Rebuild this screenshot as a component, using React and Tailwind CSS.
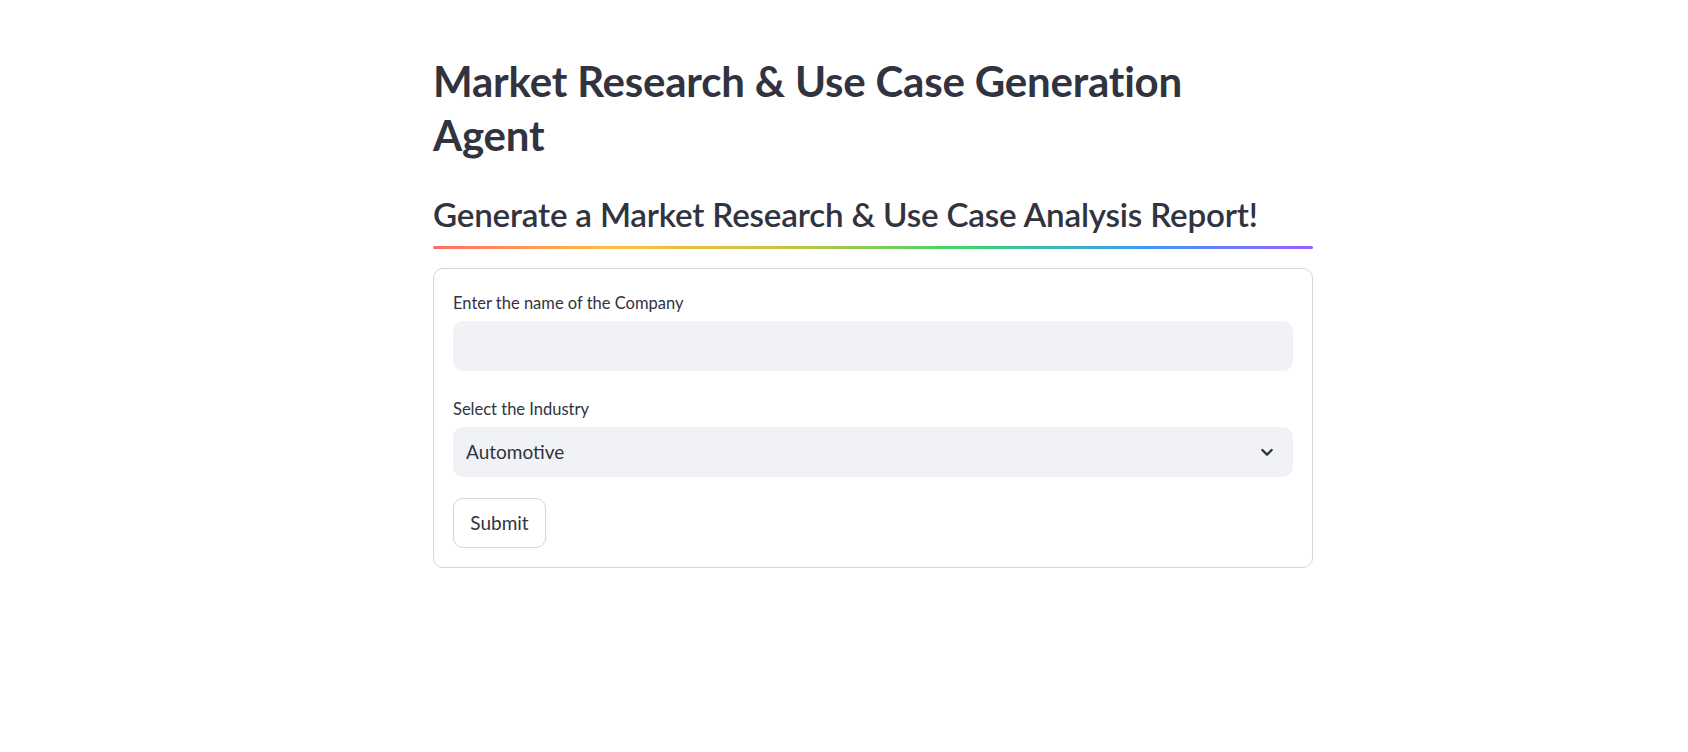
import React, { useState } from "react";

const industries = ["Automotive", "Healthcare", "Finance", "Retail", "Manufacturing", "Technology"];

function ChevronDown() {
  return (
    <svg width="16" height="16" viewBox="0 0 24 24" fill="none" stroke="currentColor" strokeWidth="3.5" strokeLinecap="round" strokeLinejoin="round">
      <path d="M5 9l7 7 7-7" />
    </svg>
  );
}

export default function App() {
  const [company, setCompany] = useState("");
  const [industry, setIndustry] = useState(industries[0]);

  return (
    <div className="min-h-screen w-full bg-white text-[#31333f] font-['Lato','Liberation_Sans',sans-serif]">
      <div className="ml-[433px] w-[880px] pt-[54px]">
        {/* Page title */}
        <h1 className="text-[42px] leading-[54px] font-bold tracking-[-0.2px]">
          Market Research &amp; Use Case Generation
          <br />
          Agent
        </h1>

        {/* Subheader with rainbow divider */}
        <h3 className="mt-[32px] text-[33.2px] leading-[40px] font-semibold tracking-[-0.2px]">
          Generate a Market Research &amp; Use Case Analysis Report!
        </h3>
        <div className="mt-[12px] h-[3px] rounded-full bg-[linear-gradient(to_right,#ff6c6c,#ffbd45,#c9c43f,#3dd56d,#3d9df3,#9a5dff)]" />

        {/* Form */}
        <form
          className="mt-[19px] rounded-[10px] border border-[#d6d6d9] px-[19px] pt-[22px] pb-[19px]"
          onSubmit={(e) => e.preventDefault()}
        >
          <label className="block text-[16.5px] leading-[24px] mb-[6px]">Enter the name of the Company</label>
          <input
            value={company}
            onChange={(e) => setCompany(e.target.value)}
            className="block w-full h-[50px] rounded-[10px] bg-[#f0f2f6] px-[14px] text-[19px] outline-none"
          />

          <label className="block mt-[26px] text-[16.5px] leading-[24px] mb-[6px]">Select the Industry</label>
          <div className="relative">
            <select
              value={industry}
              onChange={(e) => setIndustry(e.target.value)}
              className="block w-full h-[50px] appearance-none rounded-[10px] bg-[#f0f2f6] pl-[13px] pr-10 text-[19px] outline-none"
            >
              {industries.map((i) => (
                <option key={i}>{i}</option>
              ))}
            </select>
            <span className="pointer-events-none absolute right-[18px] top-1/2 -translate-y-1/2 text-[#31333f]">
              <ChevronDown />
            </span>
          </div>

          <button
            type="submit"
            className="mt-[21px] h-[50px] w-[93px] rounded-[10px] border border-[#d6d6d9] bg-white text-[19px]"
          >
            Submit
          </button>
        </form>
      </div>
    </div>
  );
}
